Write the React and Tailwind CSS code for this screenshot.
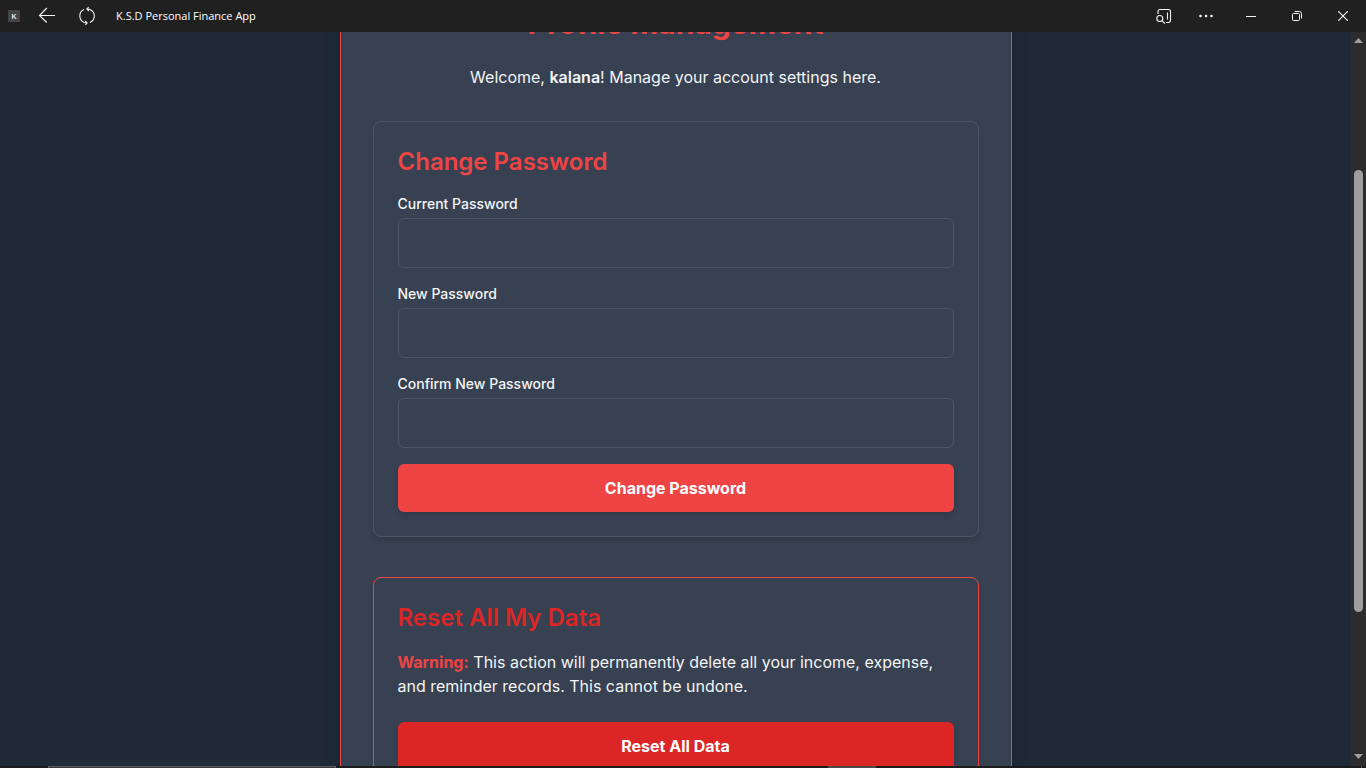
import React from "react";

function TitleBar() {
  return (
    <header className="flex h-8 shrink-0 items-center justify-between bg-[#202020] text-[#f5f5f5]">
      <div className="flex h-full items-center">
        <span className="ml-2 flex size-3 items-center justify-center rounded-[1px] bg-[#454548] font-['Liberation_Sans'] text-[7px] leading-none font-bold text-[#e4e4ee]">
          K
        </span>
        <button type="button" aria-label="Back" className="ml-[18px] flex size-[18px] items-center justify-center">
          <svg width="18" height="18" viewBox="0 0 18 18" fill="none" stroke="currentColor" strokeWidth="1.1">
            <path d="M17 8.5H1.5M8.8 1L1.5 8.5L8.8 15.5" />
          </svg>
        </button>
        <button type="button" aria-label="Refresh" className="ml-5 flex size-[22px] items-center justify-center">
          <svg width="22" height="22" viewBox="0 0 22 22" fill="none" stroke="currentColor" strokeWidth="1.1">
            <path d="M8 4.6A7 7 0 0 0 8.2 17.5L10.6 17.9M14 17.4A7 7 0 0 0 13.8 4.4L11.4 4.1" />
            <path d="M12.6 2.2L10.9 4.1L12.8 6M9.4 19.8L11.1 17.9L9.2 16" />
          </svg>
        </button>
        <span className="ml-[18px] font-['Open_Sans','Noto_Sans',sans-serif] text-[11px] leading-4 whitespace-nowrap text-white">
          K.S.D Personal Finance App
        </span>
      </div>
      <div className="flex h-full items-center">
        <button type="button" aria-label="Search in sidebar" className="flex h-full w-10 items-center justify-center">
          <svg width="16" height="16" viewBox="0 0 16 16" fill="none" stroke="currentColor" strokeWidth="1.1">
            <path d="M2 6V3.5Q2 1.5 4 1.5H12.5Q14.5 1.5 14.5 3.5V12Q14.5 14.5 12.5 14.5H10M11.5 4.5V11.5" />
            <circle cx="3.8" cy="10.5" r="3" />
            <path d="M6 12.7L8.8 15.5" />
          </svg>
        </button>
        <button type="button" aria-label="More options" className="flex h-full w-11 items-center justify-center">
          <svg width="14" height="4" viewBox="0 0 14 4" fill="currentColor">
            <circle cx="1.5" cy="2" r="1.3" />
            <circle cx="7" cy="2" r="1.3" />
            <circle cx="12.5" cy="2" r="1.3" />
          </svg>
        </button>
        <button type="button" aria-label="Minimize" className="flex h-full w-[46px] items-center justify-center">
          <svg width="10" height="10" viewBox="0 0 10 10" stroke="currentColor">
            <path d="M0 5.5H10" />
          </svg>
        </button>
        <button type="button" aria-label="Restore" className="flex h-full w-[46px] items-center justify-center">
          <svg width="10" height="10" viewBox="0 0 10 10" fill="none" stroke="currentColor">
            <rect x="0.5" y="2.5" width="7" height="7" rx="1" />
            <path d="M2.5 0.5H7.5Q9.5 0.5 9.5 2.5V7.5" />
          </svg>
        </button>
        <button type="button" aria-label="Close" className="flex h-full w-[46px] items-center justify-center">
          <svg width="10" height="10" viewBox="0 0 10 10" stroke="currentColor" strokeWidth="1.1">
            <path d="M0 0L10 10M10 0L0 10" />
          </svg>
        </button>
      </div>
    </header>
  );
}

function PasswordField({ id, label }) {
  return (
    <div>
      <label htmlFor={id} className="mb-1 block text-sm leading-5 font-medium">
        {label}
      </label>
      <input
        id={id}
        type="password"
        className="block w-full rounded-md border border-[#4b5563] bg-[#374151] p-3 leading-6 outline-none"
      />
    </div>
  );
}

function ScrollBar() {
  return (
    <div aria-hidden="true" className="flex w-[15px] shrink-0 flex-col items-center bg-[#2c2c2c]">
      <div className="flex h-[17px] items-center">
        <svg width="9" height="5" viewBox="0 0 9 5" fill="#a0a0a0">
          <path d="M4.5 0L9 5H0Z" />
        </svg>
      </div>
      <div className="grow-[121]" />
      <div className="w-[9px] grow-[442] rounded-full bg-[#9f9f9f]" />
      <div className="grow-[135]" />
      <div className="flex h-[19px] items-center">
        <svg width="9" height="5" viewBox="0 0 9 5" fill="#a0a0a0">
          <path d="M0 0H9L4.5 5Z" />
        </svg>
      </div>
    </div>
  );
}

function TaskBarEdge() {
  return (
    <div aria-hidden="true" className="flex h-0.5 shrink-0 bg-[#1c1c1c]">
      <div className="ml-12 w-72 border-x border-t border-[#5c5c5c] bg-[#3a3a3a]" />
      <div className="ml-[492px] w-12 bg-[#4a4a4a]" />
      <div className="mr-1 ml-auto w-px bg-[#5c5c5c]" />
    </div>
  );
}

export default function App() {
  return (
    <div className="flex h-screen flex-col overflow-hidden bg-[#1f2937] font-['Inter',sans-serif] text-[#f3f4f6]">
      <TitleBar />
      <div className="flex min-h-0 flex-1">
        <main className="min-w-0 flex-1 overflow-hidden">
          <div className="mx-auto -mt-15 max-w-2xl rounded-lg border border-[#ef4444] bg-[#374151] p-8 shadow-xl">
            <h1 className="mb-6 text-center text-3xl leading-9 font-bold text-[#ef4444]">Profile Management</h1>
            <p className="mb-8 text-center text-base leading-6">
              Welcome, <strong className="font-semibold">kalana</strong>! Manage your account settings here.
            </p>

            <section className="mb-10 rounded-lg border border-[#4b5563] p-6 shadow-md">
              <h2 className="mb-4 text-2xl leading-8 font-semibold text-[#ef4444]">Change Password</h2>
              <form className="flex flex-col gap-4" onSubmit={(e) => e.preventDefault()}>
                <PasswordField id="current-password" label="Current Password" />
                <PasswordField id="new-password" label="New Password" />
                <PasswordField id="confirm-password" label="Confirm New Password" />
                <button
                  type="submit"
                  className="w-full rounded-md bg-[#ef4444] py-3 text-base leading-6 font-bold text-white shadow-md"
                >
                  Change Password
                </button>
              </form>
            </section>

            <section className="rounded-lg border border-[#ef4444] p-6 shadow-md">
              <h2 className="mb-4 text-2xl leading-8 font-semibold text-[#dc2626]">Reset All My Data</h2>
              <p className="mb-6 text-base leading-6">
                <strong className="font-bold text-[#ef4444]">Warning:</strong> This action will permanently delete all
                your income, expense, and reminder records. This cannot be undone.
              </p>
              <button
                type="button"
                className="w-full rounded-md bg-[#dc2626] py-3 text-base leading-6 font-bold text-white shadow-md"
              >
                Reset All Data
              </button>
            </section>
          </div>
        </main>
        <ScrollBar />
      </div>
      <TaskBarEdge />
    </div>
  );
}
